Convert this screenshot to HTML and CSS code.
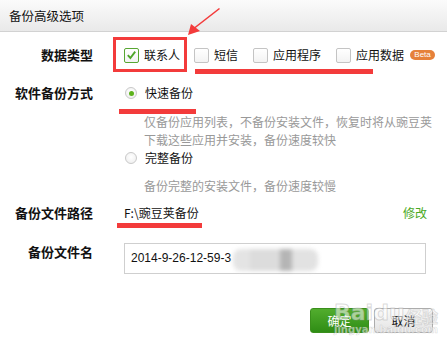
FILE: index.html
```html
<!DOCTYPE html>
<html lang="zh-CN">
<head>
<meta charset="utf-8">
<title>备份高级选项</title>
<link rel="stylesheet" href="styles.css">
</head>
<body>
<div class="dialog">
  <div class="titlebar">备份高级选项</div>
  <div class="body">
    <div class="row r-type">
      <div class="label">数据类型</div>
      <div class="field opts">
        <label class="opt"><span class="cb checked"><svg viewBox="0 0 14 14" width="14" height="14"><path d="M3 7.2 L5.8 10.2 L11 3.4" fill="none" stroke="#4fa62a" stroke-width="2"/></svg></span>联系人</label>
        <label class="opt"><span class="cb"></span>短信</label>
        <label class="opt"><span class="cb"></span>应用程序</label>
        <label class="opt"><span class="cb"></span>应用数据<span class="beta">Beta</span></label>
      </div>
    </div>
    <div class="row r-mode">
      <div class="label">软件备份方式</div>
      <div class="field">
        <label class="opt"><span class="radio on"></span>快速备份</label>
        <p class="desc d1">仅备份应用列表，不备份安装文件，恢复时将从豌豆荚<br>下载这些应用并安装，备份速度较快</p>
        <label class="opt"><span class="radio"></span>完整备份</label>
        <p class="desc d2">备份完整的安装文件，备份速度较慢</p>
      </div>
    </div>
    <div class="row r-path">
      <div class="label">备份文件路径</div>
      <div class="field path"><span>F:\豌豆荚备份</span><a class="edit">修改</a></div>
    </div>
    <div class="row r-name">
      <div class="label">备份文件名</div>
      <div class="field"><div class="input">2014-9-26-12-59-3<span class="blur"></span></div></div>
    </div>
    <div class="buttons">
      <button class="btn ok">确定</button>
      <button class="btn cancel">取消</button>
    </div>
  </div>

  <div class="mark box"></div>
  <div class="mark line l1"></div>
  <div class="mark line l2"></div>
  <div class="mark line l3"></div>
  <svg class="arrow" width="60" height="40" viewBox="0 0 60 40"><polygon points="33,8 34,9 7,30 6,29" fill="#f33b3b"/><polygon points="2,35 5,24 14,31" fill="#f33b3b"/></svg>
  <div class="watermark"><span class="wm-big">Baidu</span><span class="wm-cn">经验</span><span class="wm-small">jingyan.baidu.com</span></div>
</div>
</body>
</html>
```
FILE: styles.css
```css
* { box-sizing: border-box; }
html, body { margin: 0; padding: 0; background: #fff; }
body {
  width: 447px; height: 346px; overflow: hidden;
  font-family: "Noto Sans CJK SC", "Liberation Sans", sans-serif;
  font-size: 12px; color: #111;
}
.dialog { position: relative; width: 447px; height: 346px; }
.titlebar {
  height: 32px; line-height: 31px; padding-left: 9px;
  font-size: 12.5px; color: #111;
  background: linear-gradient(#fbfbfb, #e9e9e9);
  border-bottom: 1px solid #d2d2d2;
}
.body { padding: 0 14px 0 0; }
.row { display: flex; align-items: flex-start; }
.label {
  width: 93px; flex: none; margin-right: 31px;
  text-align: right; font-weight: 700; font-size: 13px;
  line-height: 18px; color: #111;
}
.field { flex: 1; line-height: 18px; }
.r-type { margin-top: 14px; }
.r-mode { margin-top: 20px; }
.r-path { margin-top: 9px; }
.r-name { margin-top: 21px; }
.opts { display: flex; }
.opt { display: flex; align-items: center; height: 18px; white-space: nowrap; }
.opts .opt { margin-right: 15px; }
.opts .opt:first-child { margin-right: 14px; }
.cb {
  width: 15px; height: 15px; margin-right: 5px; flex: none;
  border: 1px solid #c4c4c4; border-radius: 2px;
  background: linear-gradient(#fff, #f3f3f3);
  display: flex; align-items: center; justify-content: center;
}
.cb.checked { border-color: #58a632; }
.cb svg { display: block; }
.beta {
  margin-left: 6px; width: 25px; height: 10px; border-radius: 5px;
  background: #e6813a; color: #fff; font-family: "Liberation Sans", sans-serif;
  font-size: 8px; line-height: 10px; text-align: center;
}
.radio {
  width: 12px; height: 12px; margin: 0 8px 0 1px; flex: none; border-radius: 50%;
  border: 1px solid #c9c9c9;
  background: radial-gradient(circle at 50% 40%, #fff, #ececec);
  display: flex; align-items: center; justify-content: center;
}
.radio.on::after { content: ""; width: 5px; height: 5px; border-radius: 50%; background: #5db21c; }
.desc { margin: 0; color: #999; line-height: 18px; padding-left: 20px; }
.d1 { margin-top: 11px; }
.d2 { margin-top: 10px; }
.path { display: flex; justify-content: space-between; padding-right: 6px; }
.edit { color: #4aa923; }
.input {
  position: relative; height: 31px; width: 302px;
  border: 1px solid #cfcfcf; background: #fff;
  padding-left: 6px; line-height: 29px;
  font-family: "Liberation Sans", sans-serif; font-size: 12px; color: #111;
}
.blur {
  position: absolute; left: 108px; top: 5px; width: 85px; height: 22px;
  background: linear-gradient(90deg, #e4e4e4 0 20%, #dcdcdc 20% 55%, #b5b5b5 55% 70%, #e2e2e2 70% 100%);
  filter: blur(2px); border-radius: 8px;
}
.buttons { display: flex; justify-content: flex-end; gap: 5px; margin-top: 34px; }
.btn {
  width: 59px; height: 25px; border-radius: 3px; font-family: inherit; font-size: 12px;
  padding: 0; cursor: default;
}
.ok { color: #fff; border: 1px solid #3a8f1c; background: linear-gradient(#52ad2e, #2f8d15); }
.cancel { color: #111; border: 1px solid #acacac; background: linear-gradient(#fafafa, #e3e3e3); }
.mark { position: absolute; background: #f33b3b; }
.box { left: 113px; top: 37px; width: 74px; height: 35px; background: transparent; border: 3px solid #f33b3b; }
.line { height: 5px; }
.l1 { left: 195px; top: 69px; width: 178px; }
.l2 { left: 119px; top: 109px; width: 77px; }
.l3 { left: 117px; top: 223px; width: 85px; }
.arrow { position: absolute; left: 186px; top: 0; }
.watermark { position: absolute; left: 330px; top: 298px; width: 110px; height: 40px; pointer-events: none; }
.wm-big {
  position: absolute; left: 4px; top: 2px; font-family: "DejaVu Sans", sans-serif; font-weight: 700;
  font-size: 22px; color: rgba(255,255,255,0.55); -webkit-text-stroke: 1px rgba(150,150,150,0.35);
}
.wm-cn { position: absolute; left: 76px; top: 6px; font-size: 16px; font-weight: 700; color: rgba(255,255,255,0.5); -webkit-text-stroke: 1px rgba(150,150,150,0.3); }
.wm-small {
  position: absolute; left: 4px; top: 26px; font-family: "DejaVu Sans", sans-serif; font-weight: 700;
  font-size: 10px; color: rgba(255,255,255,0.55); -webkit-text-stroke: 0.6px rgba(150,150,150,0.35);
}
```
